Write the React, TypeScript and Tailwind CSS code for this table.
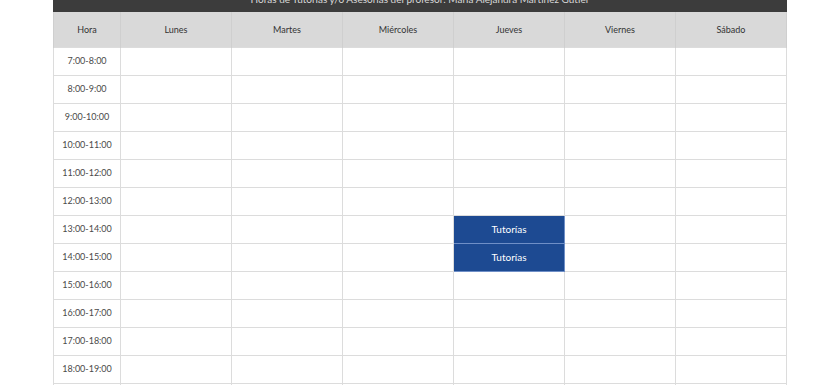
const DAYS = ["Lunes", "Martes", "Miércoles", "Jueves", "Viernes", "Sábado"];

const HOURS = [
  "7:00-8:00",
  "8:00-9:00",
  "9:00-10:00",
  "10:00-11:00",
  "11:00-12:00",
  "12:00-13:00",
  "13:00-14:00",
  "14:00-15:00",
  "15:00-16:00",
  "16:00-17:00",
  "17:00-18:00",
  "18:00-19:00",
  "19:00-20:00",
];

// slots with tutoring: hour index -> day index
const BOOKED: Record<number, number> = { 6: 3, 7: 3 };

export default function App() {
  return (
    <div className="w-[840px] h-[385px] overflow-hidden bg-white font-['Lato','Open_Sans',sans-serif]">
      <div className="ml-[53px] w-[734px] -mt-[14px]">
        {/* Title bar */}
        <div className="h-[26px] bg-[#3c3c3c] flex items-center justify-center text-[10px] text-[#d8d8d8]">
          Horas de Tutorías y/o Asesorías del profesor: María Alejandra Martínez Gutier
        </div>

        <table className="w-full table-fixed border-collapse text-[9px] text-[#4a4a4a]">
          <colgroup>
            <col className="w-[67px]" />
            {DAYS.map((d) => (
              <col key={d} />
            ))}
          </colgroup>
          <thead>
            <tr className="h-[35px] bg-[#d9d9d9] text-[#333]">
              <th className="font-normal border-x border-[#cfcfcf]">Hora</th>
              {DAYS.map((d) => (
                <th key={d} className="font-normal border-x border-[#cfcfcf]">
                  {d}
                </th>
              ))}
            </tr>
          </thead>
          <tbody>
            {HOURS.map((h, i) => (
              <tr key={h} className="h-[28px]">
                <td className="text-center border border-[#dcdcdc]">{h}</td>
                {DAYS.map((d, j) =>
                  BOOKED[i] === j ? (
                    <td
                      key={d}
                      className="text-center bg-[#1d4a92] text-white text-[10px] border border-[#6f8fc7]"
                    >
                      Tutorías
                    </td>
                  ) : (
                    <td key={d} className="border border-[#dcdcdc]" />
                  )
                )}
              </tr>
            ))}
          </tbody>
        </table>
      </div>
    </div>
  );
}
